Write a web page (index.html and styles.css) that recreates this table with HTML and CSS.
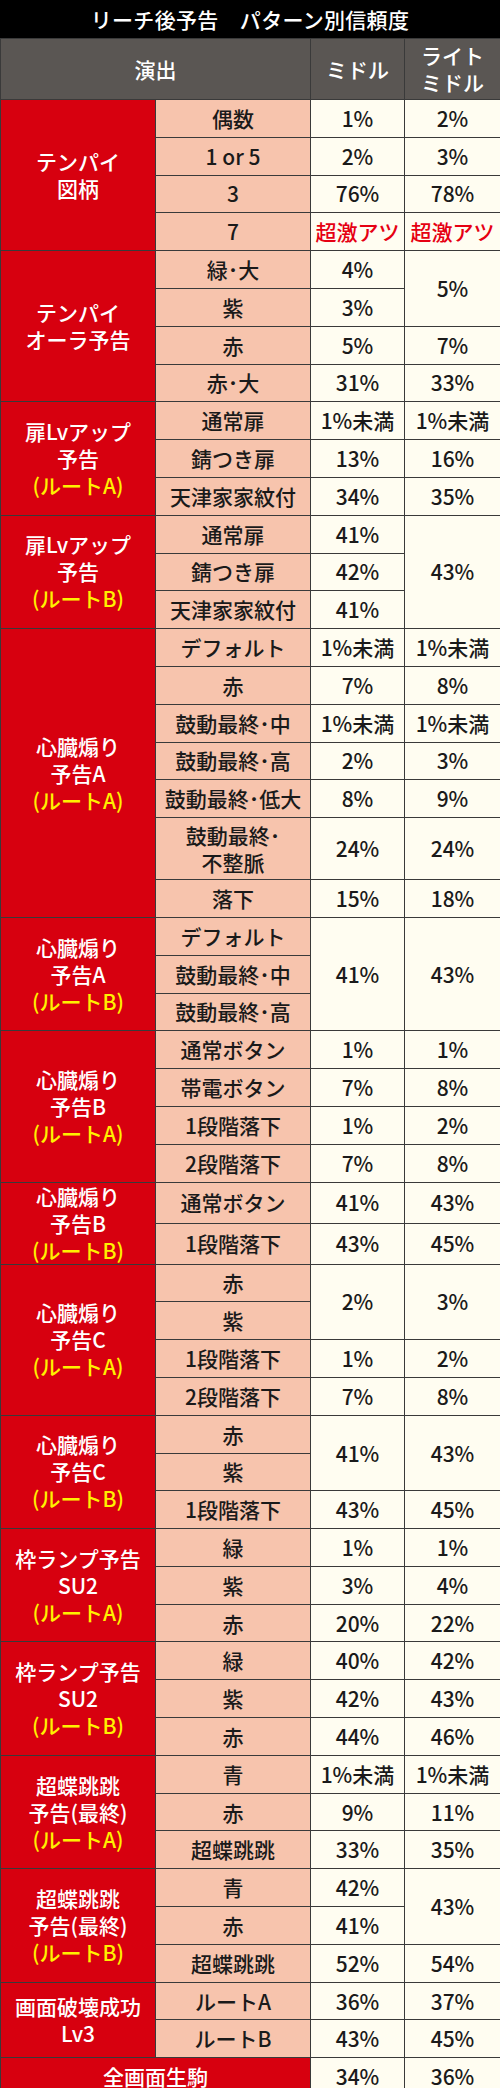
FILE: index.html
```html
<!DOCTYPE html>
<html lang="ja">
<head>
<meta charset="utf-8">
<title>リーチ後予告 パターン別信頼度</title>
<link rel="stylesheet" href="styles.css">
</head>
<body>
<div class="title">リーチ後予告　パターン別信頼度</div>
<table class="grid">
  <colgroup>
    <col class="c1"><col class="c2"><col class="c3"><col class="c4">
  </colgroup>
  <thead>
    <tr class="head">
      <th colspan="2">演出</th>
      <th>ミドル</th>
      <th>ライト<br>ミドル</th>
    </tr>
  </thead>
  <tbody>
    <tr><td class="cat" rowspan="4">テンパイ<br>図柄</td><td class="sub">偶数</td><td class="val">1%</td><td class="val">2%</td></tr>
    <tr><td class="sub">1 or 5</td><td class="val">2%</td><td class="val">3%</td></tr>
    <tr><td class="sub">3</td><td class="val">76%</td><td class="val">78%</td></tr>
    <tr><td class="sub">7</td><td class="val hot">超激アツ</td><td class="val hot">超激アツ</td></tr>

    <tr><td class="cat" rowspan="4">テンパイ<br>オーラ予告</td><td class="sub">緑･大</td><td class="val">4%</td><td class="val" rowspan="2">5%</td></tr>
    <tr><td class="sub">紫</td><td class="val">3%</td></tr>
    <tr><td class="sub">赤</td><td class="val">5%</td><td class="val">7%</td></tr>
    <tr><td class="sub">赤･大</td><td class="val">31%</td><td class="val">33%</td></tr>

    <tr><td class="cat" rowspan="3">扉Lvアップ<br>予告<br><span class="route">(ルートA)</span></td><td class="sub">通常扉</td><td class="val">1%未満</td><td class="val">1%未満</td></tr>
    <tr><td class="sub">錆つき扉</td><td class="val">13%</td><td class="val">16%</td></tr>
    <tr><td class="sub">天津家家紋付</td><td class="val">34%</td><td class="val">35%</td></tr>

    <tr><td class="cat" rowspan="3">扉Lvアップ<br>予告<br><span class="route">(ルートB)</span></td><td class="sub">通常扉</td><td class="val">41%</td><td class="val" rowspan="3">43%</td></tr>
    <tr><td class="sub">錆つき扉</td><td class="val">42%</td></tr>
    <tr><td class="sub">天津家家紋付</td><td class="val">41%</td></tr>

    <tr><td class="cat" rowspan="7">心臓煽り<br>予告A<br><span class="route">(ルートA)</span></td><td class="sub">デフォルト</td><td class="val">1%未満</td><td class="val">1%未満</td></tr>
    <tr><td class="sub">赤</td><td class="val">7%</td><td class="val">8%</td></tr>
    <tr><td class="sub">鼓動最終･中</td><td class="val">1%未満</td><td class="val">1%未満</td></tr>
    <tr><td class="sub">鼓動最終･高</td><td class="val">2%</td><td class="val">3%</td></tr>
    <tr><td class="sub">鼓動最終･低大</td><td class="val">8%</td><td class="val">9%</td></tr>
    <tr class="tall"><td class="sub">鼓動最終･<br>不整脈</td><td class="val">24%</td><td class="val">24%</td></tr>
    <tr><td class="sub">落下</td><td class="val">15%</td><td class="val">18%</td></tr>

    <tr><td class="cat" rowspan="3">心臓煽り<br>予告A<br><span class="route">(ルートB)</span></td><td class="sub">デフォルト</td><td class="val" rowspan="3">41%</td><td class="val" rowspan="3">43%</td></tr>
    <tr><td class="sub">鼓動最終･中</td></tr>
    <tr><td class="sub">鼓動最終･高</td></tr>

    <tr><td class="cat" rowspan="4">心臓煽り<br>予告B<br><span class="route">(ルートA)</span></td><td class="sub">通常ボタン</td><td class="val">1%</td><td class="val">1%</td></tr>
    <tr><td class="sub">帯電ボタン</td><td class="val">7%</td><td class="val">8%</td></tr>
    <tr><td class="sub">1段階落下</td><td class="val">1%</td><td class="val">2%</td></tr>
    <tr><td class="sub">2段階落下</td><td class="val">7%</td><td class="val">8%</td></tr>

    <tr><td class="cat" rowspan="2">心臓煽り<br>予告B<br><span class="route">(ルートB)</span></td><td class="sub">通常ボタン</td><td class="val">41%</td><td class="val">43%</td></tr>
    <tr><td class="sub">1段階落下</td><td class="val">43%</td><td class="val">45%</td></tr>

    <tr><td class="cat" rowspan="4">心臓煽り<br>予告C<br><span class="route">(ルートA)</span></td><td class="sub">赤</td><td class="val" rowspan="2">2%</td><td class="val" rowspan="2">3%</td></tr>
    <tr><td class="sub">紫</td></tr>
    <tr><td class="sub">1段階落下</td><td class="val">1%</td><td class="val">2%</td></tr>
    <tr><td class="sub">2段階落下</td><td class="val">7%</td><td class="val">8%</td></tr>

    <tr><td class="cat" rowspan="3">心臓煽り<br>予告C<br><span class="route">(ルートB)</span></td><td class="sub">赤</td><td class="val" rowspan="2">41%</td><td class="val" rowspan="2">43%</td></tr>
    <tr><td class="sub">紫</td></tr>
    <tr><td class="sub">1段階落下</td><td class="val">43%</td><td class="val">45%</td></tr>

    <tr><td class="cat" rowspan="3">枠ランプ予告<br>SU2<br><span class="route">(ルートA)</span></td><td class="sub">緑</td><td class="val">1%</td><td class="val">1%</td></tr>
    <tr><td class="sub">紫</td><td class="val">3%</td><td class="val">4%</td></tr>
    <tr><td class="sub">赤</td><td class="val">20%</td><td class="val">22%</td></tr>

    <tr><td class="cat" rowspan="3">枠ランプ予告<br>SU2<br><span class="route">(ルートB)</span></td><td class="sub">緑</td><td class="val">40%</td><td class="val">42%</td></tr>
    <tr><td class="sub">紫</td><td class="val">42%</td><td class="val">43%</td></tr>
    <tr><td class="sub">赤</td><td class="val">44%</td><td class="val">46%</td></tr>

    <tr><td class="cat" rowspan="3">超蝶跳跳<br>予告(最終)<br><span class="route">(ルートA)</span></td><td class="sub">青</td><td class="val">1%未満</td><td class="val">1%未満</td></tr>
    <tr><td class="sub">赤</td><td class="val">9%</td><td class="val">11%</td></tr>
    <tr><td class="sub">超蝶跳跳</td><td class="val">33%</td><td class="val">35%</td></tr>

    <tr><td class="cat" rowspan="3">超蝶跳跳<br>予告(最終)<br><span class="route">(ルートB)</span></td><td class="sub">青</td><td class="val">42%</td><td class="val" rowspan="2">43%</td></tr>
    <tr><td class="sub">赤</td><td class="val">41%</td></tr>
    <tr><td class="sub">超蝶跳跳</td><td class="val">52%</td><td class="val">54%</td></tr>

    <tr><td class="cat" rowspan="2">画面破壊成功<br>Lv3</td><td class="sub">ルートA</td><td class="val">36%</td><td class="val">37%</td></tr>
    <tr><td class="sub">ルートB</td><td class="val">43%</td><td class="val">45%</td></tr>

    <tr><td class="cat" colspan="2">全画面生駒</td><td class="val">34%</td><td class="val">36%</td></tr>
  </tbody>
</table>
</body>
</html>
```

FILE: styles.css
```css
html, body {
  margin: 0;
  padding: 0;
  background: #ffffff;
}

body {
  width: 500px;
  font-family: "Noto Sans CJK JP", "Noto Sans", sans-serif;
  font-weight: 500;
  -webkit-font-smoothing: antialiased;
}

.title {
  height: 38px;
  background: #000000;
  color: #ffffff;
  font-size: 21px;
  line-height: 38px;
  text-align: center;
  letter-spacing: 0.3px;
}

.grid {
  width: 500px;
  border-collapse: collapse;
  table-layout: fixed;
  border: 1px solid #2e2e2e;
}

.c1 { width: 155px; }
.c2 { width: 155px; }
.c3 { width: 94px; }
.c4 { width: 96px; }

.grid th,
.grid td {
  border: 1px solid #3a3a3a;
  padding: 0;
  text-align: center;
  vertical-align: middle;
  font-size: 21px;
  line-height: 27px;
}

.head th {
  height: 60px;
  background: #5a5653;
  color: #ffffff;
  font-weight: 500;
}

.grid tbody tr {
  height: 37.8px;
}

.grid tbody tr.tall {
  height: 62px;
}

.cat {
  background: #d7000f;
  color: #ffffff;
}

.route {
  color: #fff100;
}

.sub {
  background: #f7c4ad;
  color: #1a1a1a;
}

.val {
  background: #fffdf1;
  color: #1a1a1a;
}

.hot {
  color: #e60012;
}
```
